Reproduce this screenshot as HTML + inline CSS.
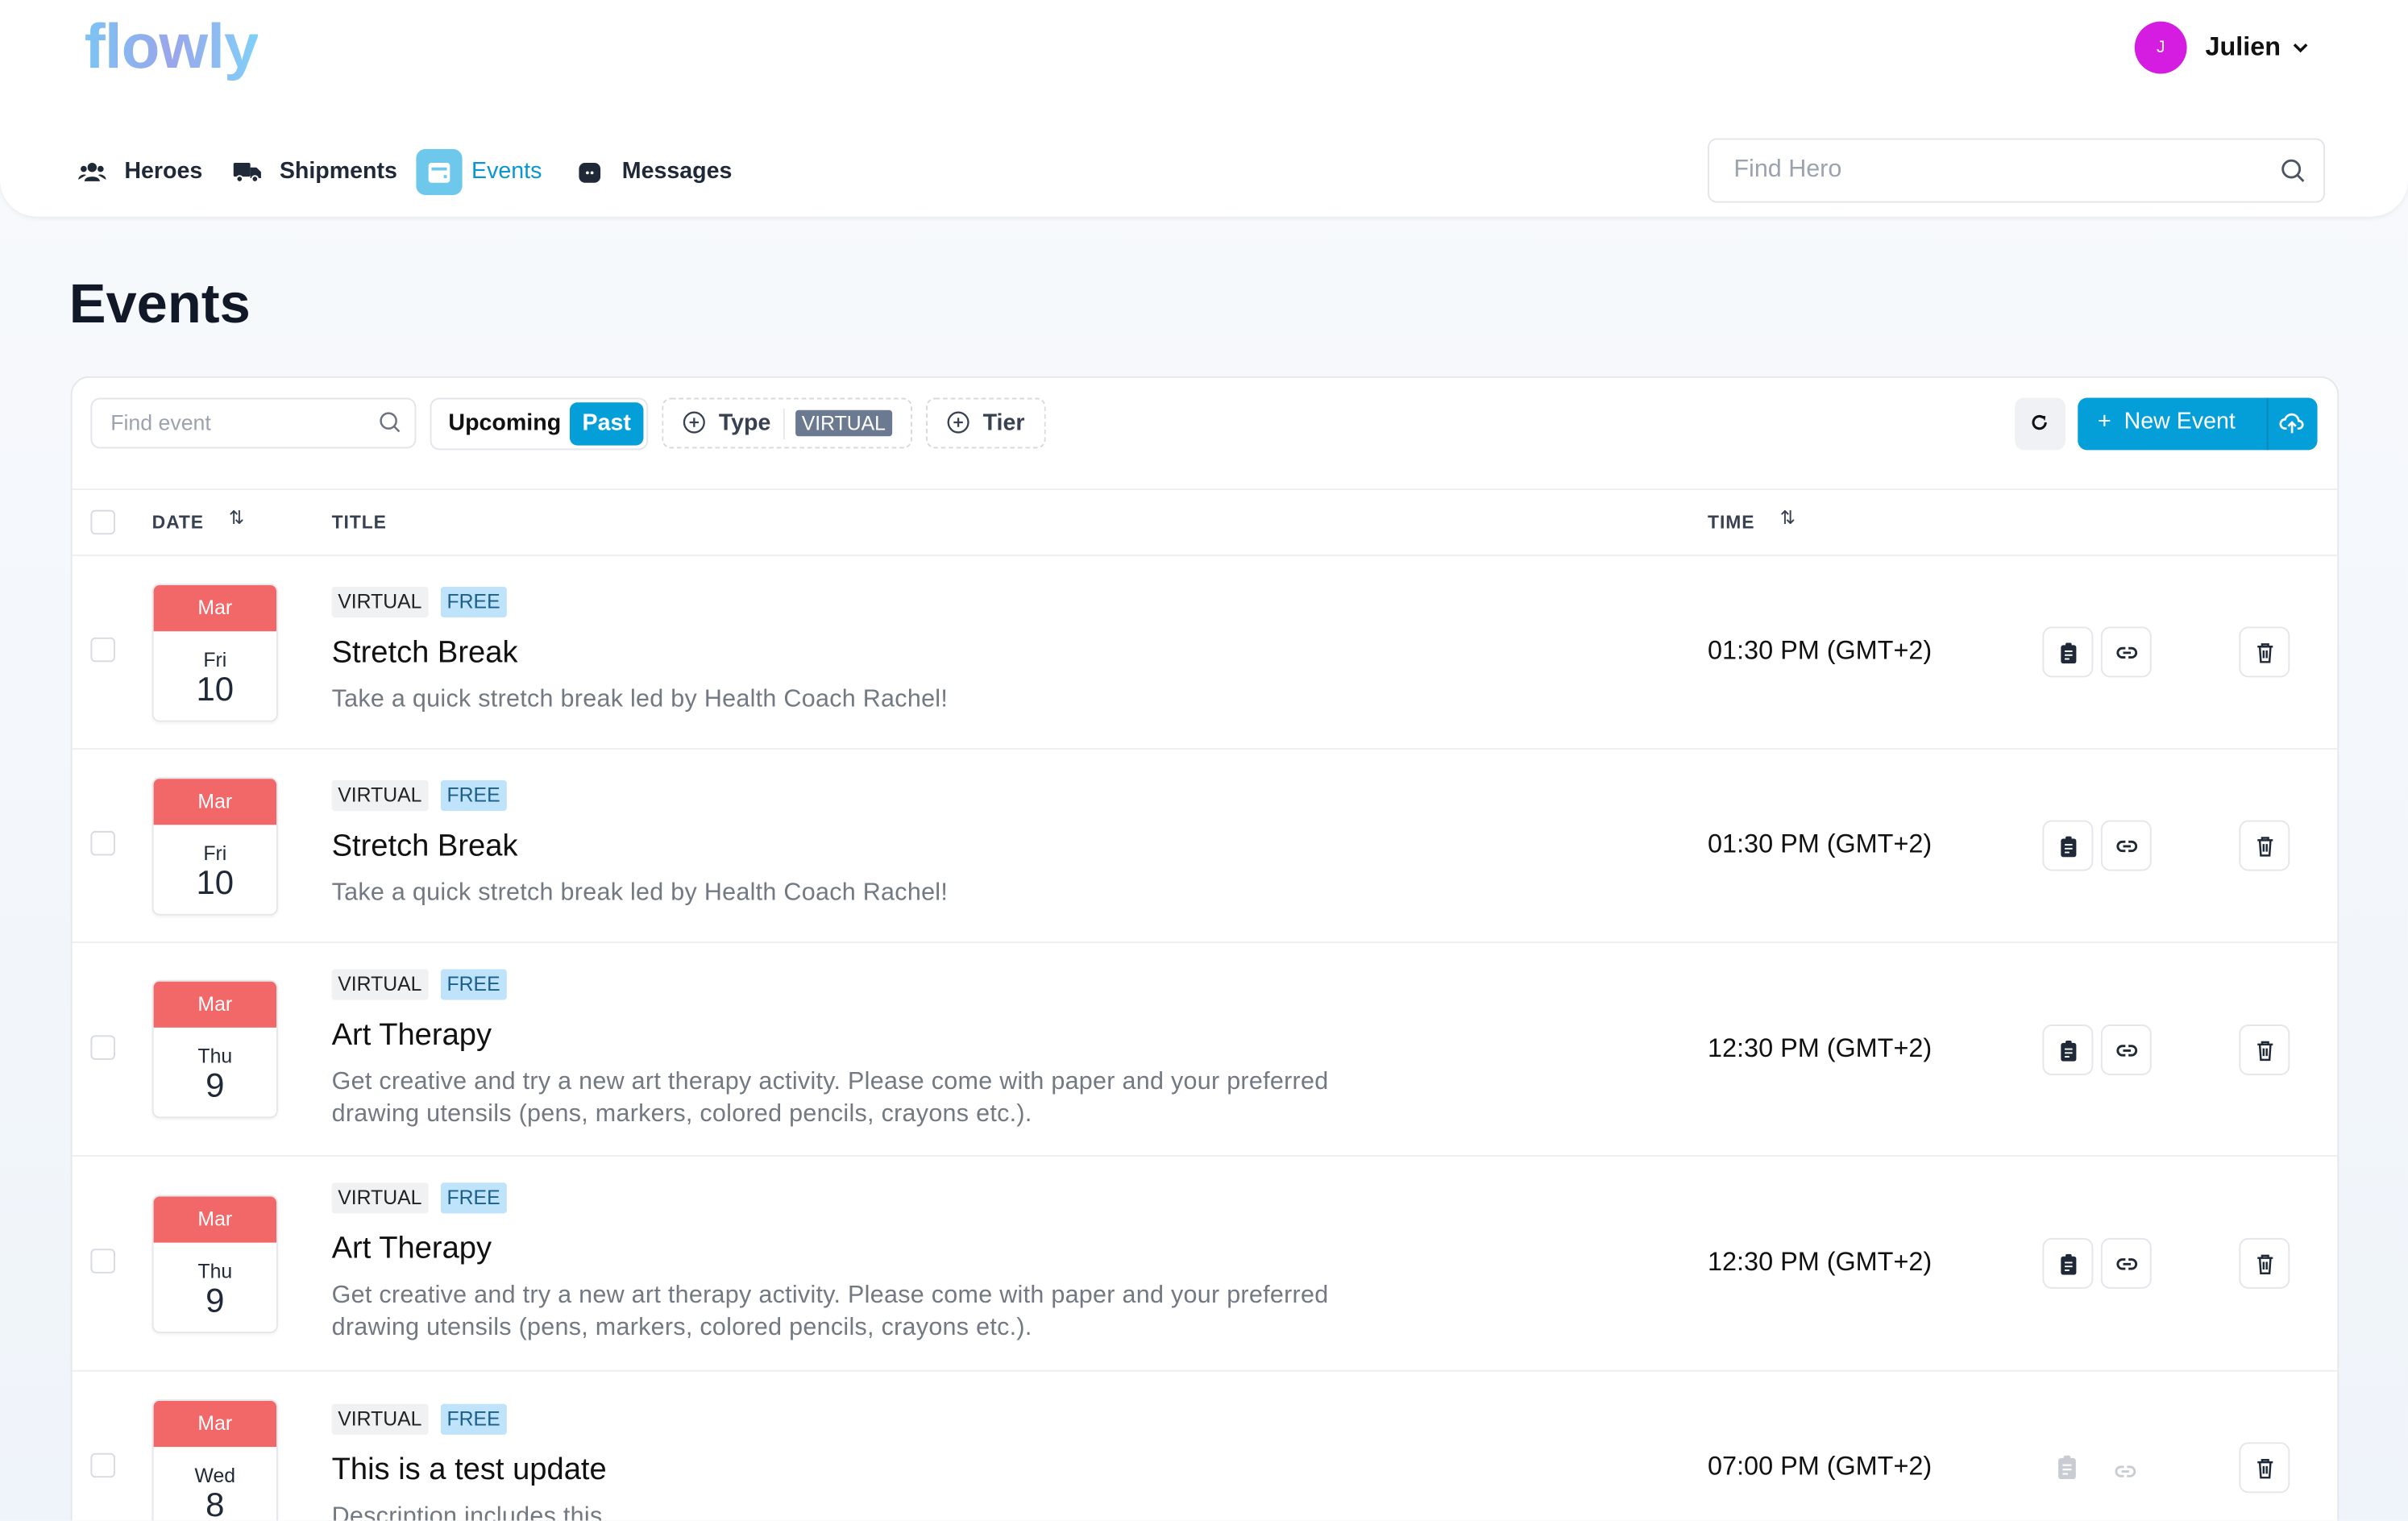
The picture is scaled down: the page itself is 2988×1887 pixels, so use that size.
<!DOCTYPE html>
<html><head><meta charset="utf-8"><style>
*{box-sizing:border-box;margin:0;padding:0}
html,body{width:2988px;height:1886px;overflow:hidden;background:#f4f7fb}
#w{position:absolute;left:0;top:0;width:1568px;height:990px;transform:scale(1.9056);transform-origin:0 0;font-family:"Liberation Sans",sans-serif;color:#1f2937;background:linear-gradient(#f8fafd,#eff4fa);overflow:hidden}
.a{position:absolute}
.hdr{left:0;top:0;width:1568px;height:141px;background:#fff;border-radius:0 0 24px 24px;box-shadow:0 1px 3px rgba(0,0,0,.06)}
.logo{left:55px;top:7px;font-size:41px;font-weight:bold;letter-spacing:-0.5px;background:linear-gradient(90deg,#7cc4f4,#9aa6ea,#80d0f8);-webkit-background-clip:text;color:transparent}
.nav{top:102px;font-size:15px;font-weight:bold;color:#1f2937;line-height:20px}
.card{left:46px;top:245px;width:1477px;height:900px;background:#fff;border:1px solid #e5e7eb;border-radius:12px}
.box{border:1px solid #e2e5ea;border-radius:6px;background:#fff}
.dash{border:1px dashed #d6d9de;border-radius:6px}
.hl{left:47px;width:1475px;height:1px;background:#eceef1}
.th{font-size:12px;font-weight:bold;letter-spacing:.5px;color:#374151}
.cb{width:16px;height:16px;border:1.5px solid #d7dbe0;border-radius:3px;left:59px}
.date{left:99px;width:82px;height:90px;border:1px solid #e5e7eb;border-radius:5px;overflow:hidden;background:#fff;text-align:center;box-shadow:0 1px 2px rgba(0,0,0,.05)}
.date .m{background:#f26767;color:#fff;height:30px;line-height:30px;font-size:13px}
.date .d{font-size:13px;margin-top:11px;line-height:15px}
.date .n{font-size:22px;line-height:24px}
.tag{font-size:13px;height:20px;line-height:20px;padding:0 4px;border-radius:2px}
.tv{left:216px;background:#f0f1f3;color:#222}
.tf{left:287px;background:#bfe3fb;color:#1b5f8a}
.tt{left:216px;font-size:20px;color:#111;line-height:24px}
.ds{left:216px;font-size:16px;color:#727982;line-height:21px;letter-spacing:.15px}
.tm{left:1112px;font-size:17px;color:#111;line-height:20px}
.btn{width:33px;height:33px;border:1px solid #e3e6ea;border-radius:6px;background:#fff;display:flex;align-items:center;justify-content:center}
</style></head><body><div id="w">
<div class="a hdr"></div>
<div class="a logo">flowly</div>
<div class="a" style="left:1390px;top:14px;width:34px;height:34px;border-radius:50%;background:#d41de0;color:#fff;font-size:11px;text-align:center;line-height:34px">J</div>
<div class="a" style="left:1436px;top:21px;font-size:17px;font-weight:bold;color:#111">Julien</div>
<svg class="a" style="left:1492px;top:26px" width="12" height="10" viewBox="0 0 12 10"><path d="M2 3l4 4 4-4" stroke="#111" stroke-width="1.8" fill="none"/></svg>

<svg class="a" style="left:51px;top:105px" width="18" height="14" viewBox="0 0 18 14"><circle cx="9" cy="4" r="3" fill="#1f2937"/><circle cx="3.5" cy="5" r="2" fill="#1f2937"/><circle cx="14.5" cy="5" r="2" fill="#1f2937"/><path d="M4 13c0-4 10-4 10 0z M0 12c0-3 4-4 5-3 M18 12c0-3-4-4-5-3" fill="#1f2937"/></svg>
<div class="a nav" style="left:81px">Heroes</div>
<svg class="a" style="left:152px;top:105px" width="18" height="14" viewBox="0 0 18 14"><rect x="0" y="1" width="11" height="9" rx="1" fill="#1f2937"/><path d="M11 4h4l3 3v4h-7z" fill="#1f2937"/><circle cx="4" cy="11.5" r="2" fill="#1f2937" stroke="#fff"/><circle cx="14" cy="11.5" r="2" fill="#1f2937" stroke="#fff"/></svg>
<div class="a nav" style="left:182px">Shipments</div>
<div class="a" style="left:271px;top:97px;width:30px;height:30px;border-radius:6px;background:#6ec8ec"></div>
<svg class="a" style="left:277px;top:103px" width="18" height="18" viewBox="0 0 18 18"><rect x="2" y="3" width="14" height="13" rx="2" fill="#fff"/><rect x="4" y="6" width="10" height="2" fill="#6ec8ec"/><rect x="12" y="11" width="2" height="2" fill="#6ec8ec"/></svg>
<div class="a nav" style="left:307px;color:#0b96d2;font-weight:normal">Events</div>
<svg class="a" style="left:376px;top:105px" width="16" height="15" viewBox="0 0 16 15"><rect x="1" y="1" width="14" height="13" rx="4" fill="#1f2937"/><circle cx="6.5" cy="7.5" r="1" fill="#fff"/><circle cx="9.5" cy="7.5" r="1" fill="#fff"/></svg>
<div class="a nav" style="left:405px">Messages</div>

<div class="a box" style="left:1112px;top:90px;width:402px;height:42px"></div>
<div class="a" style="left:1129px;top:102px;font-size:16px;color:#9ca3af">Find Hero</div>
<svg class="a" style="left:1484px;top:102px" width="18" height="18" viewBox="0 0 18 18"><circle cx="8" cy="8" r="5.5" stroke="#4b5563" stroke-width="1.5" fill="none"/><path d="M12 12l4 4" stroke="#4b5563" stroke-width="1.5"/></svg>

<div class="a" style="left:45px;top:177px;font-size:36px;font-weight:bold;color:#111827">Events</div>

<div class="a card"></div>
<div class="a box" style="left:59px;top:259px;width:212px;height:33px"></div>
<div class="a" style="left:72px;top:267px;font-size:14px;color:#9ca3af">Find event</div>
<svg class="a" style="left:246px;top:267px" width="16" height="16" viewBox="0 0 16 16"><circle cx="7" cy="7" r="5" stroke="#6b7280" stroke-width="1.3" fill="none"/><path d="M10.5 10.5l3.5 3.5" stroke="#6b7280" stroke-width="1.3"/></svg>
<div class="a box" style="left:280px;top:259px;width:142px;height:34px"></div>
<div class="a" style="left:292px;top:267px;font-size:15px;font-weight:bold;color:#111">Upcoming</div>
<div class="a" style="left:371px;top:262px;width:48px;height:28px;border-radius:5px;background:#049fd9;color:#fff;font-size:15px;font-weight:bold;text-align:center;line-height:28px">Past</div>
<div class="a dash" style="left:431px;top:259px;width:163px;height:33px"></div>
<svg class="a" style="left:444px;top:267px" width="16" height="16" viewBox="0 0 16 16"><circle cx="8" cy="8" r="6.5" stroke="#374151" stroke-width="1.2" fill="none"/><path d="M8 5v6M5 8h6" stroke="#374151" stroke-width="1.2"/></svg>
<div class="a" style="left:468px;top:267px;font-size:15px;color:#374151;font-weight:bold">Type</div>
<div class="a" style="left:510px;top:266px;width:1px;height:20px;background:#e5e7eb"></div>
<div class="a" style="left:518px;top:267px;height:17px;padding:0 4px;background:#6b7a90;color:#fff;font-size:13px;line-height:17px;border-radius:2px">VIRTUAL</div>
<div class="a dash" style="left:603px;top:259px;width:78px;height:33px"></div>
<svg class="a" style="left:616px;top:267px" width="16" height="16" viewBox="0 0 16 16"><circle cx="8" cy="8" r="6.5" stroke="#374151" stroke-width="1.2" fill="none"/><path d="M8 5v6M5 8h6" stroke="#374151" stroke-width="1.2"/></svg>
<div class="a" style="left:640px;top:267px;font-size:15px;color:#374151;font-weight:bold">Tier</div>
<div class="a" style="left:1312px;top:259px;width:33px;height:34px;border-radius:6px;background:#eff1f4"></div>
<svg class="a" style="left:1321px;top:268px" width="14" height="14" viewBox="0 0 14 14"><path d="M11 7a4 4 0 1 1-1.5-3.1" stroke="#111" stroke-width="1.6" fill="none"/><path d="M8 2.5l3 .5-.5 3z" fill="#111"/></svg>
<div class="a" style="left:1353px;top:259px;width:156px;height:34px;border-radius:6px;background:#049fd9"></div>
<div class="a" style="left:1476px;top:259px;width:1px;height:34px;background:#0689bb"></div>
<div class="a" style="left:1366px;top:266px;font-size:15px;color:#fff">+&nbsp;&nbsp;New Event</div>
<svg class="a" style="left:1484px;top:267px" width="17" height="17" viewBox="0 0 17 17"><path d="M5 12H4a3 3 0 0 1 0-6 4.5 4.5 0 0 1 8.8 1A2.5 2.5 0 0 1 13 12h-1" stroke="#fff" stroke-width="1.4" fill="none"/><path d="M8.5 15V8M6 10.5l2.5-2.5 2.5 2.5" stroke="#fff" stroke-width="1.4" fill="none"/></svg>

<div class="a hl" style="top:318px"></div>
<div class="a cb" style="top:332px"></div>
<div class="a th" style="left:99px;top:333px">DATE</div>
<div class="a" style="left:149px;top:330px;font-size:12px;color:#374151">⇅</div>
<div class="a th" style="left:216px;top:333px">TITLE</div>
<div class="a th" style="left:1112px;top:333px">TIME</div>
<div class="a" style="left:1159px;top:330px;font-size:12px;color:#374151">⇅</div>
<div class="a hl" style="top:361px"></div>
<div class="a hl" style="top:487px"></div>
<div class="a hl" style="top:613px"></div>
<div class="a hl" style="top:752px"></div>
<div class="a hl" style="top:892px"></div>

<div class="a cb" style="top:415px"></div>
<div class="a date" style="top:380px"><div class="m">Mar</div><div class="d">Fri</div><div class="n">10</div></div>
<div class="a tag tv" style="top:382px">VIRTUAL</div><div class="a tag tf" style="top:382px">FREE</div>
<div class="a tt" style="top:413px">Stretch Break</div>
<div class="a ds" style="top:445px">Take a quick stretch break led by Health Coach Rachel!</div>
<div class="a tm" style="top:414px">01:30 PM (GMT+2)</div>

<div class="a cb" style="top:541px"></div>
<div class="a date" style="top:506px"><div class="m">Mar</div><div class="d">Fri</div><div class="n">10</div></div>
<div class="a tag tv" style="top:508px">VIRTUAL</div><div class="a tag tf" style="top:508px">FREE</div>
<div class="a tt" style="top:539px">Stretch Break</div>
<div class="a ds" style="top:571px">Take a quick stretch break led by Health Coach Rachel!</div>
<div class="a tm" style="top:540px">01:30 PM (GMT+2)</div>

<div class="a cb" style="top:674px"></div>
<div class="a date" style="top:638px"><div class="m">Mar</div><div class="d">Thu</div><div class="n">9</div></div>
<div class="a tag tv" style="top:631px">VIRTUAL</div><div class="a tag tf" style="top:631px">FREE</div>
<div class="a tt" style="top:662px">Art Therapy</div>
<div class="a ds" style="top:694px">Get creative and try a new art therapy activity. Please come with paper and your preferred<br>drawing utensils (pens, markers, colored pencils, crayons etc.).</div>
<div class="a tm" style="top:673px">12:30 PM (GMT+2)</div>

<div class="a cb" style="top:813px"></div>
<div class="a date" style="top:778px"><div class="m">Mar</div><div class="d">Thu</div><div class="n">9</div></div>
<div class="a tag tv" style="top:770px">VIRTUAL</div><div class="a tag tf" style="top:770px">FREE</div>
<div class="a tt" style="top:801px">Art Therapy</div>
<div class="a ds" style="top:833px">Get creative and try a new art therapy activity. Please come with paper and your preferred<br>drawing utensils (pens, markers, colored pencils, crayons etc.).</div>
<div class="a tm" style="top:812px">12:30 PM (GMT+2)</div>

<div class="a cb" style="top:946px"></div>
<div class="a date" style="top:911px;height:110px"><div class="m">Mar</div><div class="d">Wed</div><div class="n">8</div></div>
<div class="a tag tv" style="top:914px">VIRTUAL</div><div class="a tag tf" style="top:914px">FREE</div>
<div class="a tt" style="top:945px">This is a test update</div>
<div class="a ds" style="top:977px">Description includes this</div>
<div class="a tm" style="top:945px">07:00 PM (GMT+2)</div>

<div class="a" style="left:0;top:0">
<div class="a btn" style="left:1330px;top:408px"><svg width="12" height="14" viewBox="0 0 12 14"><rect x="1" y="2" width="10" height="12" rx="1.5" fill="#1f2937"/><rect x="4" y="0.5" width="4" height="3" rx="1" fill="#1f2937"/><path d="M3.5 6h5M3.5 8.5h5M3.5 11h3" stroke="#fff" stroke-width="1"/></svg></div>
<div class="a btn" style="left:1368px;top:408px"><svg width="14" height="10" viewBox="0 0 14 10"><path d="M6 2H4a3 3 0 0 0 0 6h2M8 2h2a3 3 0 0 1 0 6H8M4.5 5h5" stroke="#1f2937" stroke-width="1.5" fill="none"/></svg></div>
<div class="a btn" style="left:1458px;top:408px"><svg width="12" height="14" viewBox="0 0 12 14"><path d="M1 3h10M4 3V1.5h4V3M2.5 3l.7 10h5.6l.7-10M5 5.5v5M7 5.5v5" stroke="#1f2937" stroke-width="1.3" fill="none"/></svg></div>
</div>
<div class="a" style="left:0;top:126px">
<div class="a btn" style="left:1330px;top:408px"><svg width="12" height="14" viewBox="0 0 12 14"><rect x="1" y="2" width="10" height="12" rx="1.5" fill="#1f2937"/><rect x="4" y="0.5" width="4" height="3" rx="1" fill="#1f2937"/><path d="M3.5 6h5M3.5 8.5h5M3.5 11h3" stroke="#fff" stroke-width="1"/></svg></div>
<div class="a btn" style="left:1368px;top:408px"><svg width="14" height="10" viewBox="0 0 14 10"><path d="M6 2H4a3 3 0 0 0 0 6h2M8 2h2a3 3 0 0 1 0 6H8M4.5 5h5" stroke="#1f2937" stroke-width="1.5" fill="none"/></svg></div>
<div class="a btn" style="left:1458px;top:408px"><svg width="12" height="14" viewBox="0 0 12 14"><path d="M1 3h10M4 3V1.5h4V3M2.5 3l.7 10h5.6l.7-10M5 5.5v5M7 5.5v5" stroke="#1f2937" stroke-width="1.3" fill="none"/></svg></div>
</div>
<div class="a" style="left:0;top:259px">
<div class="a btn" style="left:1330px;top:408px"><svg width="12" height="14" viewBox="0 0 12 14"><rect x="1" y="2" width="10" height="12" rx="1.5" fill="#1f2937"/><rect x="4" y="0.5" width="4" height="3" rx="1" fill="#1f2937"/><path d="M3.5 6h5M3.5 8.5h5M3.5 11h3" stroke="#fff" stroke-width="1"/></svg></div>
<div class="a btn" style="left:1368px;top:408px"><svg width="14" height="10" viewBox="0 0 14 10"><path d="M6 2H4a3 3 0 0 0 0 6h2M8 2h2a3 3 0 0 1 0 6H8M4.5 5h5" stroke="#1f2937" stroke-width="1.5" fill="none"/></svg></div>
<div class="a btn" style="left:1458px;top:408px"><svg width="12" height="14" viewBox="0 0 12 14"><path d="M1 3h10M4 3V1.5h4V3M2.5 3l.7 10h5.6l.7-10M5 5.5v5M7 5.5v5" stroke="#1f2937" stroke-width="1.3" fill="none"/></svg></div>
</div>
<div class="a" style="left:0;top:398px">
<div class="a btn" style="left:1330px;top:408px"><svg width="12" height="14" viewBox="0 0 12 14"><rect x="1" y="2" width="10" height="12" rx="1.5" fill="#1f2937"/><rect x="4" y="0.5" width="4" height="3" rx="1" fill="#1f2937"/><path d="M3.5 6h5M3.5 8.5h5M3.5 11h3" stroke="#fff" stroke-width="1"/></svg></div>
<div class="a btn" style="left:1368px;top:408px"><svg width="14" height="10" viewBox="0 0 14 10"><path d="M6 2H4a3 3 0 0 0 0 6h2M8 2h2a3 3 0 0 1 0 6H8M4.5 5h5" stroke="#1f2937" stroke-width="1.5" fill="none"/></svg></div>
<div class="a btn" style="left:1458px;top:408px"><svg width="12" height="14" viewBox="0 0 12 14"><path d="M1 3h10M4 3V1.5h4V3M2.5 3l.7 10h5.6l.7-10M5 5.5v5M7 5.5v5" stroke="#1f2937" stroke-width="1.3" fill="none"/></svg></div>
</div>
<div class="a" style="left:0;top:531px">
<div class="a" style="left:1339px;top:416px"><svg width="14" height="16" viewBox="0 0 12 14"><rect x="1" y="2" width="10" height="12" rx="1.5" fill="#c9cdd3"/><rect x="4" y="0.5" width="4" height="3" rx="1" fill="#c9cdd3"/><path d="M3.5 6h5M3.5 8.5h5M3.5 11h3" stroke="#fff" stroke-width="1"/></svg></div>
<div class="a" style="left:1377px;top:419px"><svg width="14" height="10" viewBox="0 0 14 10"><path d="M6 2H4a3 3 0 0 0 0 6h2M8 2h2a3 3 0 0 1 0 6H8M4.5 5h5" stroke="#c9cdd3" stroke-width="1.5" fill="none"/></svg></div>
<div class="a btn" style="left:1458px;top:408px"><svg width="12" height="14" viewBox="0 0 12 14"><path d="M1 3h10M4 3V1.5h4V3M2.5 3l.7 10h5.6l.7-10M5 5.5v5M7 5.5v5" stroke="#1f2937" stroke-width="1.3" fill="none"/></svg></div>
</div>
</div></body></html>
